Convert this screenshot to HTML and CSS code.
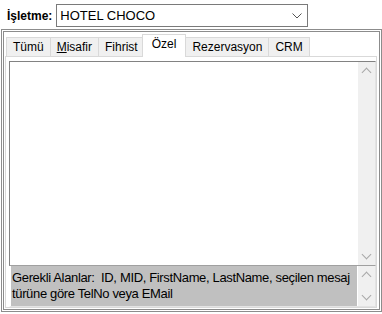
FILE: index.html
```html
<!DOCTYPE html>
<html>

<head>
    <meta charset="UTF-8">
    <title>Özel</title>
    <link rel="stylesheet" href="styles.css">
</head>

<body>
    <div class="top">
        <label class="lbl">İşletme:</label>
        <div class="combo">
            <span>HOTEL CHOCO</span>
            <svg class="chev" width="10" height="6" viewBox="0 0 10 6">
                <path d="M0.5 0.5 L5 5 L9.5 0.5" fill="none" stroke="#555" stroke-width="1" />
            </svg>
        </div>
    </div>

    <div class="frame">
        <ul class="tabs">
            <li>Tümü</li>
            <li><u>M</u>isafir</li>
            <li>Fihrist</li>
            <li class="active">Özel</li>
            <li>Rezervasyon</li>
            <li>CRM</li>
        </ul>
        <div class="page">
            <div class="memo">
                <div class="memo-text"></div>
                <div class="sbar">
                    <span class="arr up"></span>
                    <span class="arr down"></span>
                </div>
            </div>
            <div class="note">
                <div class="note-text">Gerekli Alanlar:&nbsp; ID, MID, FirstName, LastName, seçilen mesaj türüne göre TelNo veya EMail</div>
                <div class="sbar">
                    <span class="arr up"></span>
                    <span class="arr down"></span>
                </div>
            </div>
        </div>
    </div>
</body>

</html>
```

FILE: styles.css
```css
body {
    margin: 0;
    padding: 0;
    background-color: #ffffff;
    font-family: 'Liberation Sans', Arial, sans-serif;
    font-size: 12px;
    color: #000;
    width: 382px;
    height: 314px;
    overflow: hidden;
}

.top {
    display: flex;
    align-items: center;
    padding: 4px 0 0 7px;
    height: 23px;
}

.lbl {
    font-weight: bold;
    margin-right: 4px;
}

.combo {
    display: flex;
    align-items: center;
    justify-content: space-between;
    box-sizing: border-box;
    width: 252px;
    height: 23px;
    border: 1px solid #7a7a7a;
    padding: 0 0 0 3px;
    font-size: 13px;
}

.chev {
    margin-right: 5px;
}

.frame {
    box-sizing: border-box;
    margin: 2px 0 0 1px;
    height: 283px;
    border: 3px double #8c8c8c;
    padding: 2px 2px 1px 1px;
    display: flex;
    flex-direction: column;
}

.tabs {
    display: flex;
    list-style: none;
    margin: 0;
    padding: 0 0 0 1px;
    height: 22px;
    align-items: flex-end;
    position: relative;
    z-index: 1;
}

.tabs li {
    height: 19px;
    line-height: 19px;
    padding: 0 6px;
    background-color: #f0f0f0;
    border: 1px solid #d9d9d9;
    border-bottom: none;
    margin-right: -1px;
    box-sizing: border-box;
}

.tabs li.active {
    background-color: #ffffff;
    height: 23px;
    line-height: 19px;
    padding: 0 9px;
    margin: 0 -1px -1px -2px;
}

.page {
    flex: 1;
    border: 1px solid #d9d9d9;
    background-color: #fff;
    padding: 4px 0 0 3px;
    display: flex;
    flex-direction: column;
}

.memo {
    flex: 1;
    display: flex;
    border: 1px solid #828282;
    border-right-color: #e3e3e3;
    border-bottom: 1px solid #a0a0a0;
}

.memo-text {
    flex: 1;
}

.note {
    height: 40px;
    display: flex;
    background-color: #c0c0c0;
    border-left: 2px solid #fff;
    border-right: 1px solid #e3e3e3;
    border-bottom: 1px solid #e3e3e3;
}

.note-text {
    flex: 1;
    padding: 4px 0 0 1px;
    line-height: 16px;
    font-size: 13px;
    letter-spacing: -0.35px;
}

.sbar {
    width: 17px;
    background-color: #f0f0f0;
    display: flex;
    flex-direction: column;
    justify-content: space-between;
    align-items: center;
    padding: 4px 0;
    border-left: 1px solid #fff;
}

.arr {
    width: 6px;
    height: 6px;
    border-left: 1px solid #a8a8a8;
    border-top: 1px solid #a8a8a8;
}

.arr.up {
    transform: rotate(45deg);
    margin-top: 3px;
}

.arr.down {
    transform: rotate(225deg);
    margin-bottom: 3px;
}
```
